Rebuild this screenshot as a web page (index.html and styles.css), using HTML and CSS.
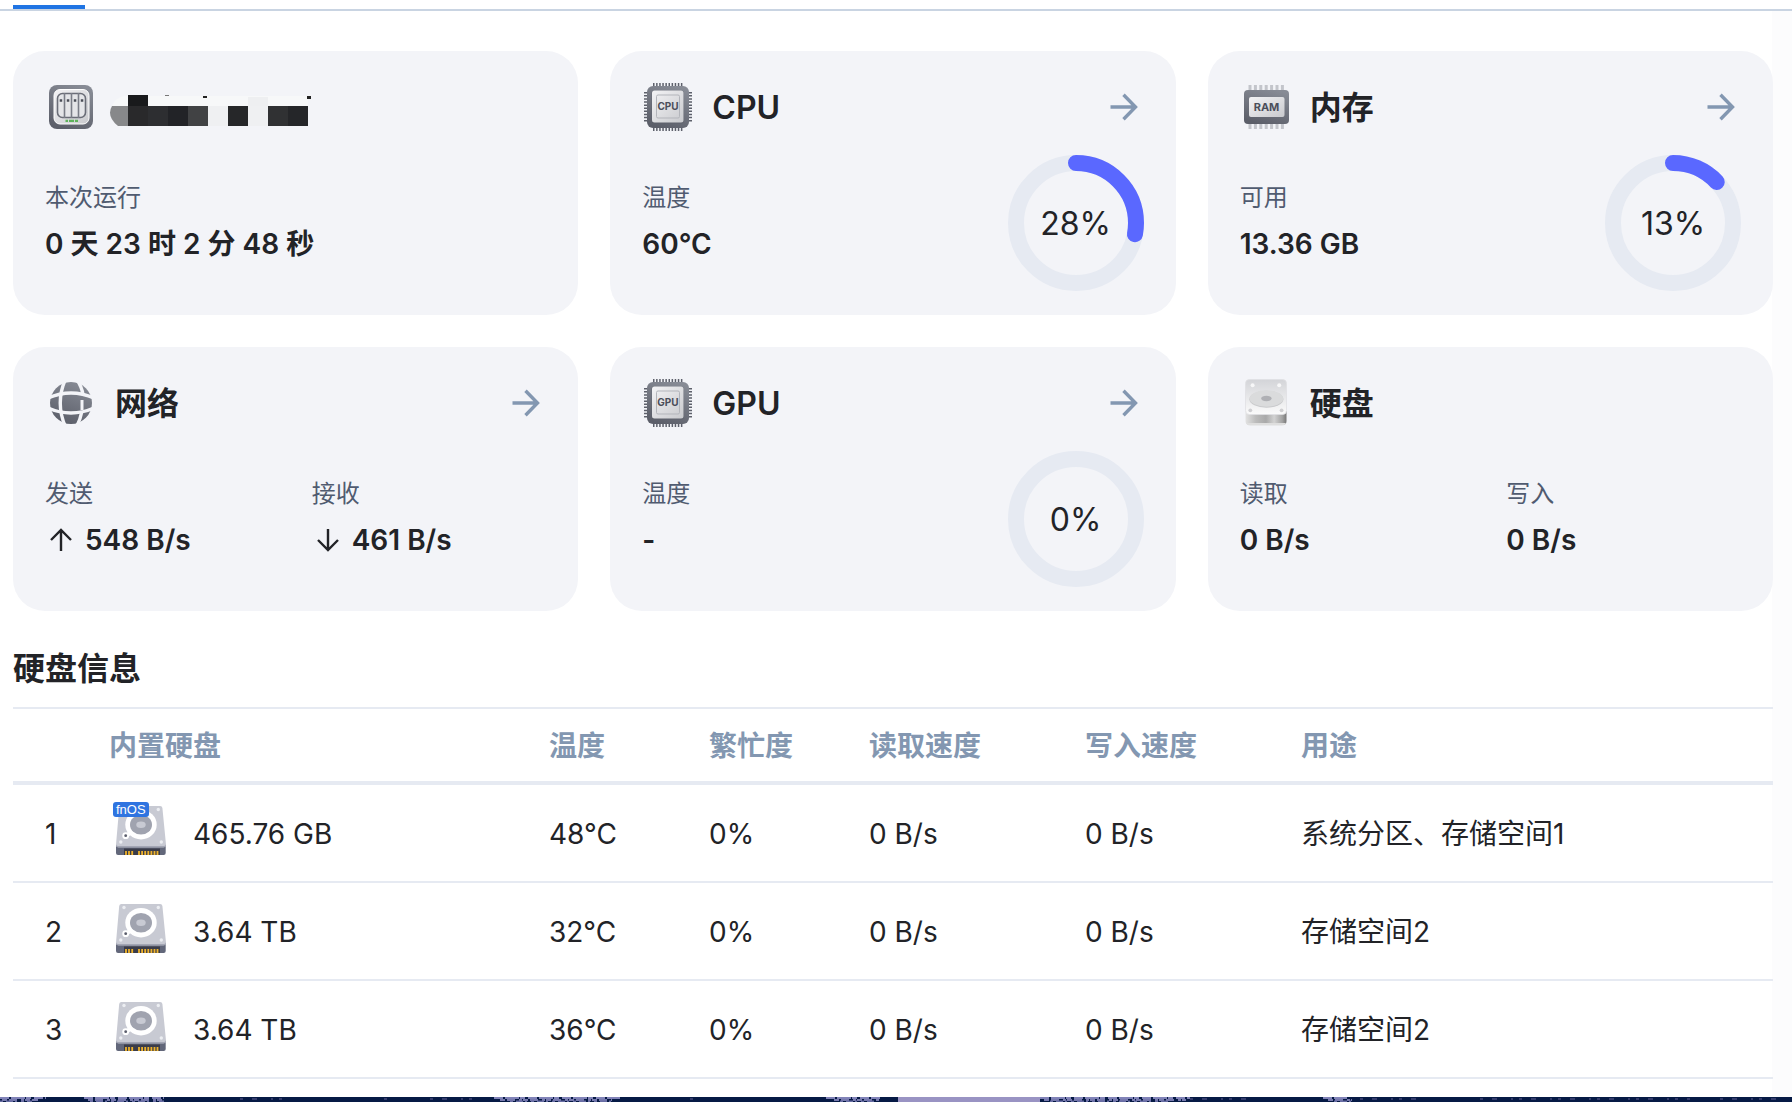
FILE: index.html
```html
<!DOCTYPE html>
<html lang="zh-CN">
<head>
  <meta charset="UTF-8" />
  <meta name="viewport" content="width=device-width, initial-scale=1.0"/>
  <title>资源监控</title>
  <link rel="stylesheet" href="styles.css">
</head>
<body>
  <!-- shared icon shapes -->
  <svg class="defs" width="0" height="0" aria-hidden="true">
    <defs>
      <linearGradient id="metal" x1="0.7" y1="0" x2="0.3" y2="1">
        <stop offset="0" stop-color="#878b95"/><stop offset="1" stop-color="#5b5e69"/>
      </linearGradient>
      <linearGradient id="plate" x1="0" y1="0" x2="1" y2="1">
        <stop offset="0" stop-color="#f3f3f5"/><stop offset="1" stop-color="#c9cace"/>
      </linearGradient>
      <linearGradient id="lid" x1="0" y1="0" x2="0" y2="1">
        <stop offset="0" stop-color="#d3d4d8"/><stop offset="1" stop-color="#fbfbfb"/>
      </linearGradient>
      <linearGradient id="front" x1="0" y1="0" x2="1" y2="0">
        <stop offset="0" stop-color="#e2e2e2"/><stop offset="0.25" stop-color="#bcbcbc"/>
        <stop offset="0.5" stop-color="#a9a9a9"/><stop offset="0.7" stop-color="#d2d2d2"/>
        <stop offset="0.9" stop-color="#a2a2a2"/><stop offset="1" stop-color="#777"/>
      </linearGradient>
      <symbol id="chip" viewBox="0 0 52 52">
        <g stroke="#5d606b" stroke-width="3" stroke-dasharray="1.5 1.6">
          <path d="M11 3.5h31M11 48.5h31M3.5 11v31M48.5 11v31"/>
        </g>
        <rect x="5" y="5" width="42" height="42" rx="6" fill="url(#metal)"/>
        <rect x="9.5" y="9.5" width="32.5" height="33" rx="2.5" fill="#5a5d68" opacity="0.5"/>
        <rect x="10" y="9.5" width="31.5" height="32" rx="2.5" fill="url(#plate)"/>
        <rect x="14.5" y="14" width="23" height="23" rx="1.5" fill="none" stroke="#b3b5bb"/>
      </symbol>
      <symbol id="arrow" viewBox="0 0 40 40">
        <path d="M6.5 20H31.5M19.500 7.700L31.500 20L19.500 32.300" fill="none" stroke="#8397b1" stroke-width="3.400"/>
      </symbol>
      <symbol id="drive" viewBox="0 0 64 64">
        <path d="M7 42h49.7v9a2 2 0 0 1-2 2H9a2 2 0 0 1-2-2z" fill="#62677a"/>
        <path d="M15 46.5h36v6.5H15z" fill="#3a3c49"/>
        <path d="M17 49v4M20 49v4M23.2 49v4M30 49v4M33.1 49v4M36.2 49v4M39.3 49v4M42.4 49v4M45.5 49v4M48.5 49v4" stroke="#eeb22c" stroke-width="1.8"/>
        <path d="M12.5 4h38.6a2.3 2.3 0 0 1 2.3 2L57 42.5a2.5 2.5 0 0 1-2.5 2.8H9.5A2.5 2.5 0 0 1 7 42.5L10.2 6a2.3 2.3 0 0 1 2.3-2z" fill="#c8cad3"/>
        <path d="M7 42.5a2.5 2.5 0 0 0 2.5 1.6h45a2.5 2.5 0 0 0 2.5-1.6a2.5 2.5 0 0 1-2.5 3H9.5a2.5 2.5 0 0 1-2.5-3z" fill="#a3a6b4"/>
        <g fill="#eceef2"><circle cx="15" cy="7.5" r="1.7"/><circle cx="49.3" cy="7.5" r="1.7"/><circle cx="11.8" cy="40" r="1.7"/><circle cx="52.3" cy="40" r="1.7"/></g>
        <path d="M17 33.5L25 29" stroke="#fff" stroke-width="4" stroke-linecap="round"/>
        <circle cx="16.7" cy="33.7" r="3.4" fill="#fff"/>
        <circle cx="16.7" cy="33.7" r="1.4" fill="#5a5d6b"/>
        <ellipse cx="32" cy="22.7" rx="15.7" ry="14.7" fill="#fff"/>
        <ellipse cx="32" cy="22.7" rx="11" ry="9.8" fill="#a0a3af"/>
        <ellipse cx="32" cy="22.7" rx="4.7" ry="3.3" fill="#c8cad3"/>
      </symbol>
    </defs>
  </svg>

  <div class="tab-bar"><span class="tab-active"></span></div>

  <main>
    <section class="cards">
      <article class="card">
        <header class="card-head">
          <svg class="card-icon" viewBox="0 0 52 52" aria-hidden="true">
            <rect x="4" y="4" width="44" height="44" rx="8" fill="url(#metal)"/>
            <rect x="9" y="8.5" width="35" height="34.5" rx="6" fill="url(#plate)" stroke="#fff"/>
            <rect x="12.5" y="12.5" width="28" height="24" rx="5" fill="#e4e5e8" stroke="#6a6d77" stroke-width="1.6"/>
            <path d="M19.5 12v25M26.5 12v25M33.5 12v25" stroke="#7a7d87" stroke-width="1.6"/>
            <path d="M14.7 19.5h2.5M21.8 19.5h2.5M28.8 19.5h2.5M35.8 19.5h2.5" stroke="#4a4d57" stroke-width="2.6"/>
            <path d="M20.5 39.8h2.5M24 39.8h5M30 39.8h3" stroke="#5fb35c" stroke-width="2.2"/>
          </svg>
          <svg class="host-mask" viewBox="-1 -8 202 40" role="img" aria-label="设备名称">
            <path d="M14 1H198V11H2Q5 3 14 1z" fill="#f7f8f9"/>
            <path d="M18 11v20H8Q-4 21 2 11z" fill="#87888a"/>
            <path d="M18 0h20v11H18z" fill="#191a1c"/>
            <path d="M18 11h20v20H18z" fill="#29292b"/>
            <path d="M38 11h20v20H38z" fill="#2d2e31"/>
            <path d="M58 11h20v20H58z" fill="#222327"/>
            <path d="M78 11h20v20H78z" fill="#414244"/>
            <path d="M98 11h20v20H98zM138 11h20v20h-20z" fill="#eff0f2"/>
            <path d="M118 11h20v20h-20z" fill="#262729"/>
            <path d="M158 11h20v20h-20z" fill="#303133"/>
            <path d="M178 11h20v20h-20z" fill="#252629"/>
            <path d="M138 2h20v9h-20z" fill="#eeeff1"/>
            <path d="M93 1h4v2h-4zM197 1h4v3h-4z" fill="#222"/>
            <path d="M55 0h4v1h-4z" fill="#777"/>
          </svg>
        </header>
        <div class="card-body">
          <dl class="stat"><dt>本次运行</dt><dd>0 天 23 时 2 分 48 秒</dd></dl>
        </div>
      </article>

      <article class="card">
        <header class="card-head">
          <svg class="card-icon" viewBox="0 0 52 52" aria-hidden="true">
            <use href="#chip"/>
            <text class="chip-text" x="26" y="29">CPU</text>
          </svg>
          <h2>CPU</h2>
          <button type="button" class="more" aria-label="CPU"><svg viewBox="0 0 40 40"><use href="#arrow"/></svg></button>
        </header>
        <div class="card-body">
          <dl class="stat"><dt>温度</dt><dd>60°C</dd></dl>
          <div class="ring">
            <svg viewBox="0 0 136 136" aria-hidden="true">
              <circle class="ring-track" cx="68" cy="68" r="60"/>
              <circle class="ring-value" cx="68" cy="68" r="60" pathLength="100" stroke-dasharray="28 100" transform="rotate(-90 68 68)"/>
            </svg>
            <span>28%</span>
          </div>
        </div>
      </article>

      <article class="card">
        <header class="card-head">
          <svg class="card-icon" viewBox="0 0 52 52" aria-hidden="true">
            <path d="M8.5 6.5h36M8.5 45.5h36" stroke="#c3c5cb" stroke-width="5" stroke-dasharray="3 2.4"/>
            <rect x="4" y="9" width="45" height="34" rx="4" fill="url(#metal)"/>
            <rect x="9" y="16" width="35.5" height="20" rx="2" fill="url(#plate)"/>
            <text class="chip-text ram-text" x="26.5" y="30">RAM</text>
          </svg>
          <h2>内存</h2>
          <button type="button" class="more" aria-label="内存"><svg viewBox="0 0 40 40"><use href="#arrow"/></svg></button>
        </header>
        <div class="card-body">
          <dl class="stat"><dt>可用</dt><dd>13.36 GB</dd></dl>
          <div class="ring">
            <svg viewBox="0 0 136 136" aria-hidden="true">
              <circle class="ring-track" cx="68" cy="68" r="60"/>
              <circle class="ring-value" cx="68" cy="68" r="60" pathLength="100" stroke-dasharray="13 100" transform="rotate(-90 68 68)"/>
            </svg>
            <span>13%</span>
          </div>
        </div>
      </article>

      <article class="card">
        <header class="card-head">
          <svg class="card-icon" viewBox="0 0 52 52" aria-hidden="true">
            <circle cx="26" cy="26" r="21" fill="url(#metal)"/>
            <g fill="none" stroke="#f3f4f8" stroke-width="3.4">
              <path d="M20.500 2Q10 26 20.500 50M31.500 2Q37 10 38 18M37 34Q35.500 42 31.500 50"/>
              <path d="M3 21Q26 11 49 21M3 31Q26 41 49 31"/>
              <path d="M37 23v10" stroke-width="3"/>
            </g>
          </svg>
          <h2>网络</h2>
          <button type="button" class="more" aria-label="网络"><svg viewBox="0 0 40 40"><use href="#arrow"/></svg></button>
        </header>
        <div class="card-body">
          <dl class="stat">
            <dt>发送</dt>
            <dd>
              <svg class="direction" viewBox="0 0 32 32" aria-hidden="true"><path d="M16 27V6M6 16L16 6L26 16"/></svg>
              548 B/s
            </dd>
          </dl>
          <dl class="stat">
            <dt>接收</dt>
            <dd>
              <svg class="direction" viewBox="0 0 32 32" aria-hidden="true"><path d="M16 5V26M6 16L16 26L26 16"/></svg>
              461 B/s
            </dd>
          </dl>
        </div>
      </article>

      <article class="card">
        <header class="card-head">
          <svg class="card-icon" viewBox="0 0 52 52" aria-hidden="true">
            <use href="#chip"/>
            <text class="chip-text" x="26" y="29">GPU</text>
          </svg>
          <h2>GPU</h2>
          <button type="button" class="more" aria-label="GPU"><svg viewBox="0 0 40 40"><use href="#arrow"/></svg></button>
        </header>
        <div class="card-body">
          <dl class="stat"><dt>温度</dt><dd>-</dd></dl>
          <div class="ring">
            <svg viewBox="0 0 136 136" aria-hidden="true">
              <circle class="ring-track" cx="68" cy="68" r="60"/>
            </svg>
            <span>0%</span>
          </div>
        </div>
      </article>

      <article class="card">
        <header class="card-head">
          <svg class="card-icon" viewBox="0 0 52 52" aria-hidden="true">
            <path d="M5.5 34h41v10a4 4 0 0 1-4 4h-33a4 4 0 0 1-4-4z" fill="url(#front)"/>
            <path d="M6 46q1 2.5 4 2.5h32q3 0 4-2.5z" fill="#dedede"/>
            <rect x="5.5" y="2.5" width="41" height="35" rx="4" fill="url(#lid)" stroke="#dfe0e3" stroke-width="0.8"/>
            <ellipse cx="26.4" cy="22.3" rx="17" ry="8.5" fill="#c9cacc"/>
            <ellipse cx="26.4" cy="21.5" rx="16.8" ry="8.2" fill="#dadbdc"/>
            <ellipse cx="26.4" cy="21.5" rx="5.2" ry="2.7" fill="#afb0b4"/>
            <circle cx="12.6" cy="8.3" r="2" fill="#f7f7f8"/><circle cx="39.2" cy="8.3" r="2" fill="#f7f7f8"/>
            <circle cx="10.3" cy="33.3" r="1.9" fill="#cfcfd2"/><circle cx="41.6" cy="33.3" r="1.9" fill="#cfcfd2"/>
          </svg>
          <h2>硬盘</h2>
        </header>
        <div class="card-body">
          <dl class="stat"><dt>读取</dt><dd>0 B/s</dd></dl>
          <dl class="stat"><dt>写入</dt><dd>0 B/s</dd></dl>
        </div>
      </article>
    </section>

    <h2 class="section-title">硬盘信息</h2>
    <table class="disks">
      <colgroup>
        <col class="col-index"><col class="col-disk"><col class="col-short"><col class="col-short">
        <col class="col-speed"><col class="col-speed"><col>
      </colgroup>
      <thead>
        <tr><th></th><th>内置硬盘</th><th>温度</th><th>繁忙度</th><th>读取速度</th><th>写入速度</th><th>用途</th></tr>
      </thead>
      <tbody>
        <tr>
          <td>1</td>
          <td>
            <div class="disk">
              <span class="disk-icon"><svg viewBox="0 0 64 64" aria-hidden="true"><use href="#drive"/></svg><b class="badge">fnOS</b></span>
              465.76 GB
            </div>
          </td>
          <td>48°C</td><td>0%</td><td>0 B/s</td><td>0 B/s</td><td>系统分区、存储空间1</td>
        </tr>
        <tr>
          <td>2</td>
          <td>
            <div class="disk">
              <span class="disk-icon"><svg viewBox="0 0 64 64" aria-hidden="true"><use href="#drive"/></svg></span>
              3.64 TB
            </div>
          </td>
          <td>32°C</td><td>0%</td><td>0 B/s</td><td>0 B/s</td><td>存储空间2</td>
        </tr>
        <tr>
          <td>3</td>
          <td>
            <div class="disk">
              <span class="disk-icon"><svg viewBox="0 0 64 64" aria-hidden="true"><use href="#drive"/></svg></span>
              3.64 TB
            </div>
          </td>
          <td>36°C</td><td>0%</td><td>0 B/s</td><td>0 B/s</td><td>存储空间2</td>
        </tr>
      </tbody>
    </table>
  </main>

  <!-- desktop wallpaper under the window -->
  <svg class="wallpaper" viewBox="0 0 1792 5" preserveAspectRatio="none" aria-hidden="true">
    <g fill="none" stroke-width="2">
      <path d="M0 1h46M84 1h80M494 1h126M826 1h54M1040 1h150M1323 1h24" stroke="#8183b8" stroke-dasharray="9 2 14 1 5 3"/>
      <path d="M2 3h36M88 3h74M500 3h112M834 3h46M1044 3h142M1328 3h24" stroke="#7779ae" stroke-dasharray="5 2 8 4 3 1"/>
      <path d="M0 4.5h32M90 4.5h74M510 4.5h104M840 4.5h34M1050 4.5h120M1334 4.5h20" stroke="#686da4" stroke-dasharray="3 3 7 2 2 4"/>
      <path d="M898 2.5h142" stroke="#9993c3" stroke-width="5"/>
      <path d="M240 2h50M384 2h12M430 2h50M690 2h12M1190 2h70M1360 2h60M1480 2h210M1720 2h60" stroke="#343c6c" stroke-dasharray="3 9 5 14 2 6"/>
    </g>
  </svg>
</body>
</html>
```
FILE: styles.css
```css
* {
  box-sizing: border-box;
}

body {
  margin: 0;
  min-height: 100vh;
  display: flex;
  flex-direction: column;
  font-family: Inter, "Noto Sans CJK SC", sans-serif;
  font-size: 28px;
  line-height: 40px;
  color: #222327;
  background: #fff;
}

h2 {
  margin: 0;
  font-size: 32px;
  font-weight: 600;
  line-height: 48px;
}

.defs {
  position: absolute;
}

.tab-bar {
  display: flex;
  align-items: flex-end;
  height: 11px;
  padding-left: 13px;
  border-bottom: 2px solid #c9d4e2;
}

.tab-active {
  width: 72px;
  height: 4px;
  background: #1f74e3;
}

main {
  flex: 1;
  padding: 40px 19px 18px 13px;
  background: linear-gradient(to left, #fcfcfd 20px, #fff 20px);
}

/* cards */
.cards {
  display: grid;
  grid-template-columns: repeat(3, 1fr);
  gap: 32px;
}

.card {
  padding: 30px 32px 24px;
  border-radius: 32px;
  background: #f3f4f8;
}

.card-head {
  display: flex;
  align-items: center;
  gap: 12px;
  height: 52px;
}

.card-head h2 {
  flex: 1;
  padding: 2px 0 0 6px;
}

.card-icon {
  width: 52px;
  height: 52px;
}

.chip-text {
  font-size: 10px;
  font-weight: 700;
  fill: #4b4e5a;
  text-anchor: middle;
}

.ram-text {
  font-size: 11px;
}

.host-mask {
  width: 202px;
  height: 40px;
}

.more {
  width: 40px;
  height: 40px;
  padding: 0;
  border: none;
  background: none;
  cursor: pointer;
}

.more svg {
  display: block;
}

.card-body {
  display: flex;
  align-items: center;
  gap: 32px;
  height: 136px;
  margin-top: 22px;
}

.stat {
  flex: 1;
  margin: 0;
}

.stat dt {
  margin-bottom: 10px;
  font-size: 24px;
  line-height: 32px;
  color: #505b70;
}

.stat dd {
  display: flex;
  align-items: center;
  gap: 8px;
  margin: 0;
  font-weight: 600;
}

.direction {
  width: 32px;
  height: 32px;
  fill: none;
  stroke: #222327;
  stroke-width: 2.4;
}

.ring {
  display: grid;
  place-items: center;
  width: 136px;
  height: 136px;
  font-size: 32px;
}

.ring svg,
.ring span {
  grid-area: 1 / 1;
}

.ring span {
  padding-top: 2px;
}

.ring circle {
  fill: none;
  stroke-width: 16;
}

.ring-track {
  stroke: #e6eaf2;
}

.ring-value {
  stroke: #5a68ff;
  stroke-linecap: round;
}

/* disk table */
.section-title {
  margin: 34px 0 14px;
}

.disks {
  width: 100%;
  table-layout: fixed;
  border-spacing: 0;
}

.col-index {
  width: 64px;
}

.col-disk {
  width: 440px;
}

.col-short {
  width: 160px;
}

.col-speed {
  width: 216px;
}

.disks th,
.disks td {
  padding: 2px 0 0 32px;
  text-align: left;
  white-space: nowrap;
}

.disks th {
  height: 78px;
  border-top: 2px solid #e6eaf2;
  border-bottom: 4px solid #e6eaf2;
  font-weight: 600;
  color: #8397b1;
}

.disks td {
  height: 98px;
  border-bottom: 2px solid #e6eaf2;
}

.disk {
  display: flex;
  align-items: center;
  gap: 20px;
}

.disk-icon {
  position: relative;
  width: 64px;
  height: 64px;
}

.disk-icon svg {
  display: block;
}

.badge {
  position: absolute;
  top: 0;
  left: 4px;
  padding: 0 3px;
  border-radius: 3px;
  font-family: "Liberation Sans", sans-serif;
  font-size: 13px;
  font-weight: 400;
  line-height: 15px;
  color: #fff;
  background: #2f74e0;
}

.wallpaper {
  display: block;
  width: 100%;
  height: 5px;
  background: #061a45;
}
```
